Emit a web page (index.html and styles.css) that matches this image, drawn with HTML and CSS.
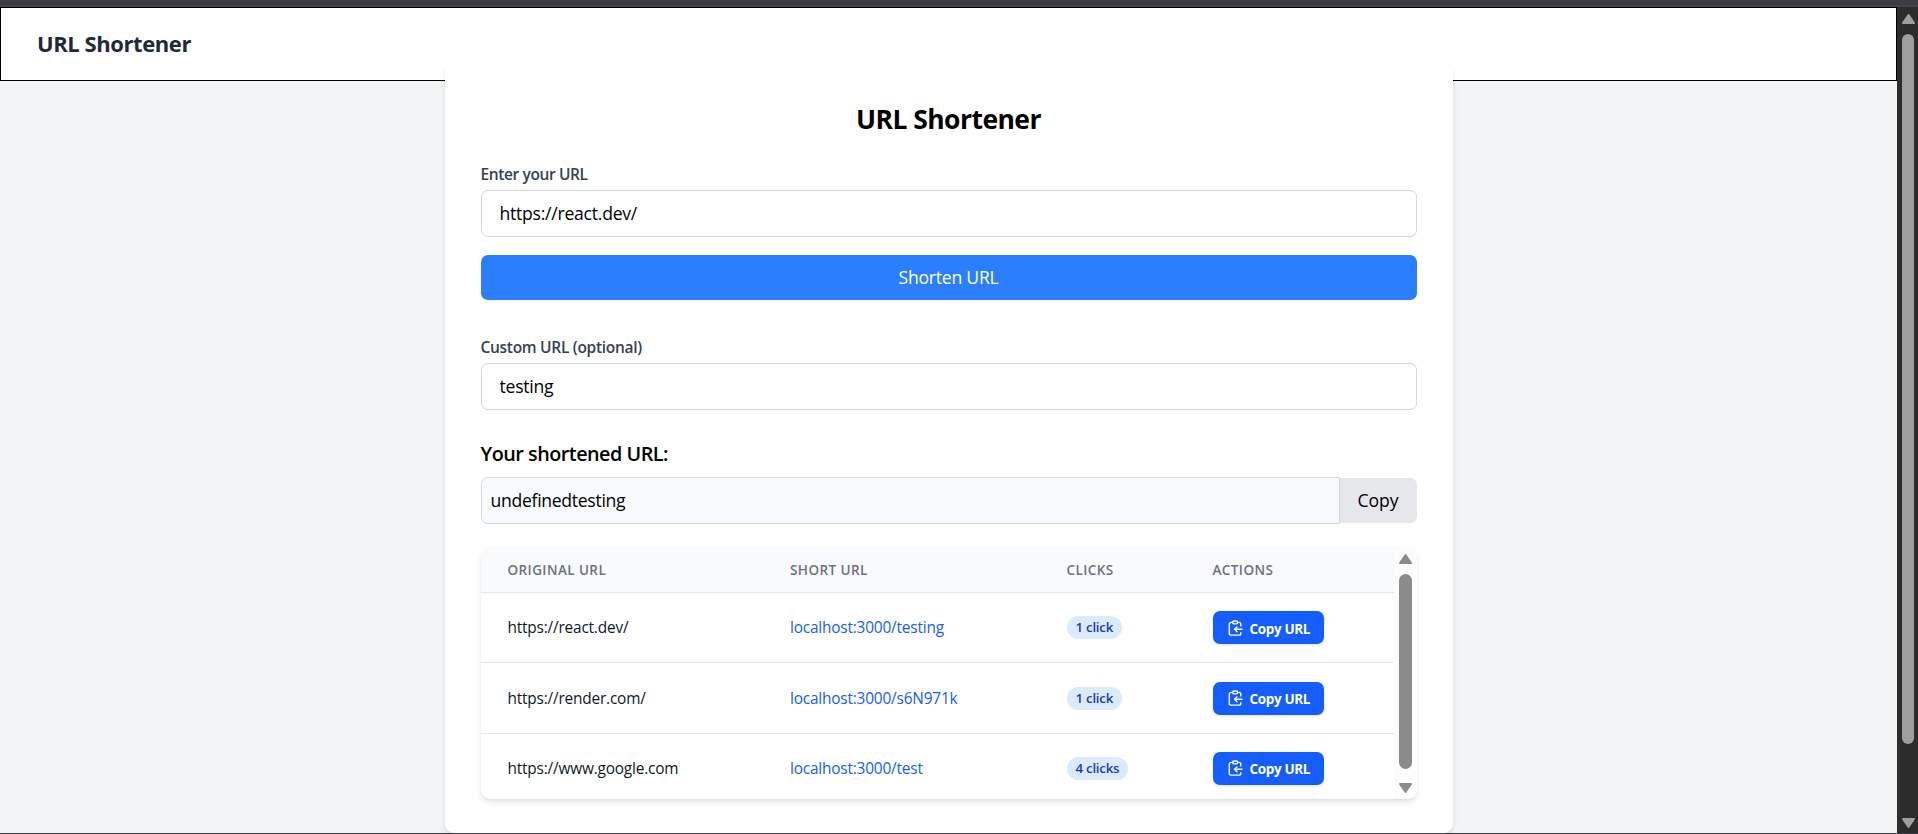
FILE: index.html
```html
<!DOCTYPE html>
<html lang="en">
<head>
<meta charset="utf-8">
<title>URL Shortener</title>
<link rel="stylesheet" href="styles.css">
</head>
<body>
<svg class="sprite" aria-hidden="true">
  <symbol id="clip" viewBox="0 0 18 18">
    <rect x="5.6" y="2" width="5" height="2.9" rx="1.4"/>
    <path d="M5.6 3.4H4.2a1.9 1.9 0 0 0-1.9 1.9v8.9a1.9 1.9 0 0 0 1.9 1.9h7.7a1.9 1.9 0 0 0 1.9-1.9v-.5"/>
    <path d="M10.6 3.4h1.3a1.9 1.9 0 0 1 1.9 1.9v1.6"/>
    <path d="M15 10.3H7.6"/>
    <path d="m10 7.9-2.4 2.4 2.4 2.4"/>
  </symbol>
  <symbol id="arrow" viewBox="0 0 15 12">
    <path d="M7.5 2 13 10H2Z"/>
  </symbol>
</svg>
<div class="chrome-strip"></div>
<div class="viewport">
  <div class="page">
    <nav class="nav"><span class="brand">URL Shortener</span></nav>
    <main class="card">
      <h1 class="title">URL Shortener</h1>
      <label class="label label-first" for="url">Enter your URL</label>
      <input class="input" id="url" type="text" value="https://react.dev/">
      <button class="submit">Shorten URL</button>
      <label class="label" for="custom">Custom URL (optional)</label>
      <input class="input" id="custom" type="text" value="testing">
      <h2 class="subtitle">Your shortened URL:</h2>
      <div class="result">
        <input class="result-input" type="text" value="undefinedtesting" readonly>
        <button class="result-copy">Copy</button>
      </div>
      <div class="panel">
        <div class="rows">
          <div class="row head"><span>ORIGINAL URL</span><span>SHORT URL</span><span>CLICKS</span><span>ACTIONS</span></div>
          <div class="row"><span>https://react.dev/</span><a class="link">localhost:3000/testing</a><span class="pill">1 click</span><button class="copy"><svg class="icon"><use href="#clip"/></svg>Copy URL</button></div>
          <div class="row"><span>https://render.com/</span><a class="link">localhost:3000/s6N971k</a><span class="pill">1 click</span><button class="copy"><svg class="icon"><use href="#clip"/></svg>Copy URL</button></div>
          <div class="row"><span>https://www.google.com</span><a class="link">localhost:3000/test</a><span class="pill">4 clicks</span><button class="copy"><svg class="icon"><use href="#clip"/></svg>Copy URL</button></div>
        </div>
        <div class="bar bar-light"><svg class="arrow"><use href="#arrow"/></svg><div class="thumb"></div><svg class="arrow down"><use href="#arrow"/></svg></div>
      </div>
    </main>
  </div>
  <div class="bar bar-dark"><svg class="arrow"><use href="#arrow"/></svg><div class="thumb"></div><svg class="arrow down"><use href="#arrow"/></svg></div>
</div>
</body>
</html>
```

FILE: styles.css
```css
* { box-sizing: border-box; margin: 0; }
body {
  height: 834px;
  overflow: hidden;
  display: flex;
  flex-direction: column;
  border-bottom: 1px solid #3f404b;
  background: #f3f4f6;
  font-family: "Open Sans", "Noto Sans", sans-serif;
  font-size: 17.6px;
  color: #000;
}
button, input { font: inherit; letter-spacing: inherit; color: inherit; border: 0; }
.sprite { display: none; }

.chrome-strip { flex: none; height: 7px; background: #3a3c46; border-bottom: 2px solid #45434c; }
.viewport { flex: 1; min-height: 0; display: flex; overflow: hidden; }
.page { flex: 1; display: flex; flex-direction: column; }

.nav {
  flex: none;
  height: 74px;
  padding: 0 36px 2px;
  display: flex;
  align-items: center;
  border: 1px solid #000;
  background: #fff;
}
.brand { font-size: 22px; font-weight: 700; letter-spacing: -.42px; color: #1e2939; }

.card {
  position: relative;
  flex: none;
  width: 1008px;
  height: 770px;
  margin: -18px auto 0;
  padding: 36px;
  display: flex;
  flex-direction: column;
  border-radius: 9px;
  background: #fff;
  box-shadow: 0 4px 7px -1px rgba(0, 0, 0, .1), 0 2px 4px -2px rgba(0, 0, 0, .1);
}
.card > * { flex-shrink: 0; }
.title { font-size: 26.5px; line-height: 36px; font-weight: 700; letter-spacing: -.55px; text-align: center; margin: 2px 0 27px; }
.label { font-size: 15.5px; line-height: 22px; font-weight: 600; letter-spacing: -.29px; color: #364153; margin: -1px 0 5px; }
.label-first { letter-spacing: -.38px; }
.input {
  height: 47px;
  padding: 0 18px 1px;
  border: 1px solid #d1d5dc;
  border-radius: 7px;
  background: #fff;
  letter-spacing: -.25px;
}
.submit {
  height: 45px;
  margin: 18px 0 37px;
  padding: 0 0 2px;
  border-radius: 7px;
  background: #2b7fff;
  color: #fff;
  letter-spacing: -.25px;
}
.subtitle { font-size: 19.8px; line-height: 30px; font-weight: 600; letter-spacing: -.5px; margin: 29px 0 8px; }
.result { display: flex; align-items: center; height: 47px; }
.result-input {
  width: 859px;
  height: 47px;
  padding: 0 9px 1px;
  border: 1px solid #d1d5dc;
  border-radius: 7px 0 0 7px;
  background: #f9fafb;
  letter-spacing: -.3px;
}
.result-copy { flex: 1; height: 45px; padding: 0 0 1px; border-radius: 0 7px 7px 0; background: #e5e7eb; }

.panel {
  display: flex;
  height: 252px;
  margin-top: 23px;
  border-radius: 9px;
  overflow: hidden;
  background: #fff;
  box-shadow: 0 4px 7px -1px rgba(0, 0, 0, .1), 0 2px 4px -2px rgba(0, 0, 0, .1);
}
.rows { flex: 1; }
.row {
  display: grid;
  grid-template-columns: 282.5px 276.5px 146px 1fr;
  align-items: center;
  justify-items: start;
  height: 70.4px;
  padding-left: 27px;
  border-bottom: 1px solid #e5e7eb;
  font-size: 15.4px;
  letter-spacing: -.19px;
  color: #101828;
}
.head { height: 46px; background: #f9fafb; font-size: 13.5px; font-weight: 600; letter-spacing: .42px; color: #6a7282; }
.link { color: #155dfc; }
.pill { height: 23px; padding: 0 9px; border-radius: 12px; background: #dbeafe; color: #193cb8; font-size: 13.3px; line-height: 23px; font-weight: 600; letter-spacing: -.25px; }
.copy {
  display: flex;
  align-items: center;
  width: 111px;
  height: 33px;
  padding: 2px 0 0 14px;
  border-radius: 7px;
  background: #155dfc;
  color: #fff;
  font-size: 13.5px;
  font-weight: 700;
  letter-spacing: -.35px;
  box-shadow: 0 1px 3px rgba(0, 0, 0, .12);
}
.icon { width: 18px; height: 18px; margin: -2px 5px 0 0; fill: none; stroke: #fff; stroke-width: 1.4; stroke-linecap: round; stroke-linejoin: round; }

.bar { flex: none; display: flex; flex-direction: column; align-items: center; }
.arrow { flex: none; width: 15px; height: 12px; fill: currentColor; stroke: currentColor; stroke-width: 2; stroke-linejoin: round; }
.down { transform: rotate(180deg); }
.thumb { flex: none; background: currentColor; border-radius: 7px; }
.bar-light { width: 23px; padding-top: 6px; background: #fcfcfc; color: #8b8b8b; }
.bar-light .thumb { width: 13px; height: 195px; margin: 9px 0 13px; }
.bar-dark { width: 21px; padding: 6px 0 0 1px; background: #2c2c2c; color: #9f9f9f; }
.bar-dark .thumb { width: 12px; height: 710px; margin: 9px 0 73px; }
```
